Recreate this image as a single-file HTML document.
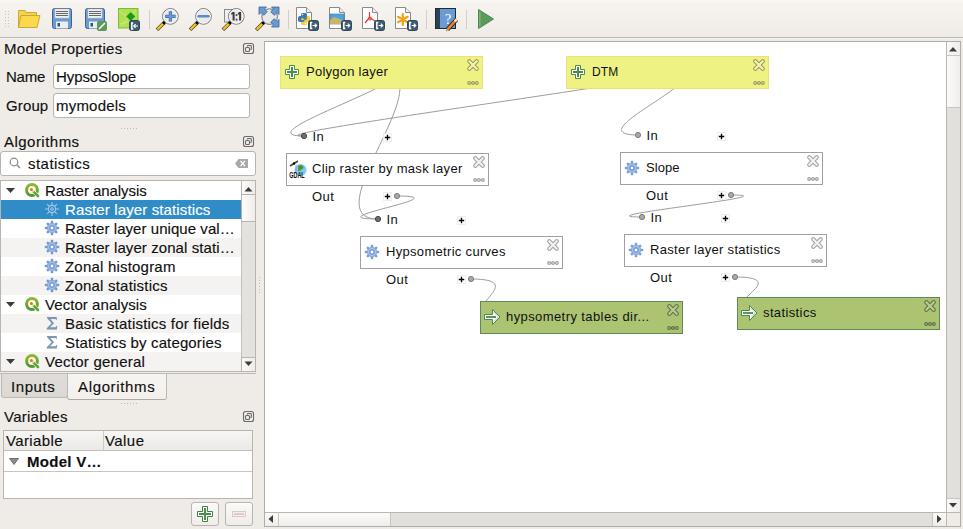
<!DOCTYPE html>
<html><head><meta charset="utf-8">
<style>
*{box-sizing:border-box;margin:0;padding:0}
html,body{width:963px;height:529px;overflow:hidden;background:#efece8;font-family:"Liberation Sans",sans-serif;color:#101010}
.abs{position:absolute}
#tb{left:0;top:0;width:963px;height:38px;background:linear-gradient(#f9f8f6 0px,#f7f4f0 2px,#efebe7 37px);border-bottom:1px solid #b9b5b0}
.t{position:absolute;white-space:nowrap;font-size:15px;line-height:18px;-webkit-text-stroke:0.15px currentColor}
.inp{position:absolute;background:#fff;border:1px solid #b8b4ae;border-radius:3px}
.float{position:absolute;width:11px;height:11px;border:1px solid #6b6b6b;border-radius:2px}
.float:after{content:"";position:absolute;left:2px;top:1px;width:4px;height:4px;border:1px solid #6b6b6b;border-radius:1px}
.float:before{content:"";position:absolute;left:4px;top:4px;width:4px;height:3px;border:1px solid #6b6b6b;border-radius:1px;background:#efece8}
#tree{left:0px;top:180px;width:256px;height:192px;background:#fff;border:1px solid #b8b4ae}
.row{position:absolute;left:0;width:240px;height:19px}
.row.alt{background:#f5f3f1}
.row.sel{background:#308cc6;color:#fff}
.sb{position:absolute;background:#e4e2df}
.btn{position:absolute;background:linear-gradient(#fbfaf9,#efedea);border:1px solid #b8b4ae}
#canvas{left:264px;top:41px;width:697px;height:486px;border:1px solid #b0ada8;background:#fff}
svg text{font-family:"Liberation Sans",sans-serif;font-size:13px;fill:#111}
</style></head><body>
<div id="tb" class="abs"></div>
<div class="abs" style="left:0;top:38px;width:963px;height:1px;background:#f7f4f1"></div>
<svg class="abs" style="left:0;top:0" width="963" height="38" viewBox="0 0 963 38">
<defs>
<g id="badge"><rect x="0.5" y="0.5" width="10" height="10" rx="2" fill="#3e5b72" stroke="#2f475a"/><path d="M4.3,2.6H2.8V8.4H4.3" fill="none" stroke="#fff" stroke-width="1.5"/><path d="M4.6,5.5H8.6M6.8,3.6L8.7,5.5 6.8,7.4" fill="none" stroke="#fff" stroke-width="1.2"/></g>
<g id="page"><path d="M0.5,0.5H10.5L15.5,5.5V21.5H0.5Z" fill="#fff" stroke="#8a8a8a"/><path d="M10.5,0.5V5.5H15.5" fill="#eee" stroke="#8a8a8a"/></g>
<g id="handle"><path d="M-13.4,13.4L-6.5,6.5" stroke="#3a3a3a" stroke-width="3.6"/><path d="M-13,13L-7,7" stroke="#f5c518" stroke-width="2.2"/><circle cx="-6.3" cy="6.3" r="1.7" fill="#000"/></g>
</defs>
<!-- handle dots -->
<g fill="#c6c3be">
<rect x="5" y="11" width="1" height="1"/><rect x="8" y="11" width="1" height="1"/>
<rect x="5" y="14" width="1" height="1"/><rect x="8" y="14" width="1" height="1"/>
<rect x="5" y="17" width="1" height="1"/><rect x="8" y="17" width="1" height="1"/>
<rect x="5" y="20" width="1" height="1"/><rect x="8" y="20" width="1" height="1"/>
<rect x="5" y="23" width="1" height="1"/><rect x="8" y="23" width="1" height="1"/>
<rect x="5" y="26" width="1" height="1"/><rect x="8" y="26" width="1" height="1"/>
</g>
<!-- open folder -->
<path d="M18.5,27.5V10.5H25L26,12.5H36.5V15.5" fill="#f6d24a" stroke="#c9a835"/>
<path d="M18.5,27.5L21,15.5H40L37,27.5Z" fill="#fcd84c" stroke="#c9a835"/>
<!-- save -->
<g>
<rect x="52.5" y="8.5" width="19" height="20" rx="2" fill="#6c9bd2" stroke="#3d6294"/>
<rect x="55" y="9" width="14" height="9" fill="#efefef" stroke="#c8c8c8" stroke-width=".6"/>
<path d="M56,11.5H68M56,13.5H68M56,15.5H68" stroke="#555" stroke-width=".9"/>
<rect x="56" y="21.5" width="12" height="7" fill="#eeeeee"/>
<rect x="57.5" y="23" width="2.5" height="3.5" fill="#2e5580"/>
</g>
<g>
<rect x="85.5" y="8.5" width="19" height="20" rx="2" fill="#6c9bd2" stroke="#3d6294"/>
<rect x="88" y="9" width="14" height="9" fill="#efefef" stroke="#c8c8c8" stroke-width=".6"/>
<path d="M89,11.5H101M89,13.5H101M89,15.5H101" stroke="#555" stroke-width=".9"/>
<rect x="89" y="21.5" width="12" height="7" fill="#eeeeee"/>
<rect x="90.5" y="23" width="2.5" height="3.5" fill="#2e5580"/>
<rect x="97" y="21" width="10" height="10" rx="2" fill="#5a9a5c"/>
<path d="M99,29L105,23" stroke="#fff" stroke-width="1.6"/>
</g>
<!-- export as image (green) -->
<rect x="118.5" y="8.5" width="19.5" height="19.5" fill="#b6de52" stroke="#6cc23e"/>
<path d="M119,11L129,18.5M136,10L121,26M120,24L134,20" stroke="#d9f09a" stroke-width=".6" fill="none"/>
<path d="M130.7,12L135.2,16.5 130.7,21 126.2,16.5Z" fill="#159b16"/>
<rect x="129.5" y="20.5" width="10" height="10" rx="2" fill="#3e5b72" stroke="#2f475a"/>
<path d="M133.3,23.1H131.8V28.9H133.3" fill="none" stroke="#fff" stroke-width="1.5"/>
<path d="M138,26H133.8M135.6,24.1L133.7,26 135.6,27.9" fill="none" stroke="#fff" stroke-width="1.2"/>
<rect x="149" y="10" width="1" height="19" fill="#d2cfca"/>
<!-- zoom in -->
<use href="#handle" x="170.4" y="16.4"/>
<circle cx="170.4" cy="16.4" r="7.8" fill="#e9e9e9" stroke="#6e6e6e" stroke-width="1"/><circle cx="170.4" cy="16.4" r="6.8" fill="none" stroke="#fafafa" stroke-width="1"/>
<path d="M170.4,11.2V21.6M165.2,16.4H175.6" stroke="#3f6ea8" stroke-width="3.2"/><path d="M170.4,11.8V21M165.8,16.4H175" stroke="#6a9ad2" stroke-width="1.8"/>
<!-- zoom out -->
<use href="#handle" x="203.5" y="16.4"/>
<circle cx="203.5" cy="16.4" r="7.8" fill="#e9e9e9" stroke="#6e6e6e" stroke-width="1"/><circle cx="203.5" cy="16.4" r="6.8" fill="none" stroke="#fafafa" stroke-width="1"/>
<path d="M198.6,16.3H208.4" stroke="#5b8cc4" stroke-width="2.6" stroke-linecap="round"/>
<!-- zoom 1:1 -->
<rect x="224.5" y="9.5" width="8" height="12.5" fill="#eee" stroke="#8a8a8a"/>
<use href="#handle" x="236.3" y="16.4"/>
<circle cx="236.3" cy="16.4" r="7.8" fill="#e9e9e9" stroke="#6e6e6e" stroke-width="1"/><circle cx="236.3" cy="16.4" r="6.8" fill="none" stroke="#fafafa" stroke-width="1"/>
<g fill="#3a3a3a"><path d="M232.6,12H234.6V20.5H232.6V14.2L231.2,14.8V13.2Z"/><rect x="235.7" y="14.2" width="1.7" height="1.7"/><rect x="235.7" y="18.8" width="1.7" height="1.7"/><path d="M239.1,12H241.1V20.5H239.1V14.2L237.9,14.8V13.2Z"/></g>
<!-- zoom full -->
<use href="#handle" x="269.6" y="16.6"/>
<circle cx="269.6" cy="16.6" r="7.8" fill="#e9e9e9" stroke="#6e6e6e" stroke-width="1"/>
<g fill="#6a9ad2" stroke="#3d6294" stroke-width=".8" stroke-linejoin="round">
<path transform="translate(259 7)" d="M0,0H7.5L5.5,2 8.3,4.8 4.8,8.3 2,5.5 0,7.5Z"/>
<path transform="translate(279 7) scale(-1 1)" d="M0,0H7.5L5.5,2 8.3,4.8 4.8,8.3 2,5.5 0,7.5Z"/>
<path transform="translate(279 27) scale(-1 -1)" d="M0,0H7.5L5.5,2 8.3,4.8 4.8,8.3 2,5.5 0,7.5Z"/>
</g>
<rect x="288" y="10" width="1" height="19" fill="#d2cfca"/>
<!-- python -->
<use href="#page" x="296" y="7"/>
<g fill="#f7cf3c"><rect x="301" y="20" width="6" height="5" rx="1.6"/><rect x="303.5" y="16" width="6.5" height="6" rx="1.8"/></g>
<g fill="#3d78b3"><rect x="301" y="13" width="6" height="5" rx="1.6"/><rect x="298" y="16" width="6.5" height="6" rx="1.8"/></g>
<rect x="304.2" y="18" width="2.6" height="1.6" fill="#3d78b3"/><rect x="301.2" y="18.4" width="2.6" height="1.6" fill="#f7cf3c"/>
<circle cx="302.6" cy="14.5" r=".7" fill="#fff"/><circle cx="305.5" cy="23.5" r=".7" fill="#fff"/>
<use href="#badge" x="308" y="20"/>
<!-- image -->
<use href="#page" x="329" y="7"/>
<rect x="330" y="14" width="14" height="10" fill="#49a6e6" stroke="#5b6e80" stroke-width=".6"/>
<path d="M330,20L334,17 338,18.5 344,21V24H330Z" fill="#cdb560"/>
<use href="#badge" x="341" y="20"/>
<!-- pdf -->
<use href="#page" x="362" y="7"/>
<path d="M369.5,12V17.5M369.5,17.5L365,23M369.5,17.5L375,21" stroke="#e8392c" stroke-width="1.2" fill="none"/>
<circle cx="370" cy="18.5" r="1.5" fill="none" stroke="#e8392c"/>
<use href="#badge" x="374" y="20"/>
<!-- svg -->
<use href="#page" x="395" y="7"/>
<path d="M402.8,14V25M398,16.8L407.6,22.2M398,22.2L407.6,16.8" stroke="#f7a110" stroke-width="2.2" stroke-linecap="round"/>
<use href="#badge" x="407" y="20"/>
<rect x="426" y="10" width="1" height="19" fill="#d2cfca"/>
<!-- help -->
<rect x="435.5" y="8.5" width="20" height="20" fill="#6a9bd3" stroke="#1e2a36"/>
<rect x="436" y="9" width="4" height="19" fill="#2c4258"/>
<text x="448" y="24" text-anchor="middle" style="font-family:'Liberation Serif';font-size:14px;fill:#fff">?</text>
<path d="M447.5,29.5L456.5,19.5" stroke="#3a2a1a" stroke-width="4.2"/>
<path d="M447.5,29.5L456.5,19.5" stroke="#f0841e" stroke-width="2.6"/>
<path d="M454.8,21.4L456.6,19.4" stroke="#e8e8e8" stroke-width="2.6"/>
<path d="M446.3,31L448,28.8" stroke="#9a9a9a" stroke-width="1.4"/>
<rect x="466" y="10" width="1" height="19" fill="#d2cfca"/>
<!-- run -->
<path d="M478.5,9.5V28.5L493.5,19Z" fill="#5a9a5a" stroke="#4a8a4a"/>
<path d="M479.9,11.5V26.5" stroke="#b8d8b0" stroke-width=".6"/>
</svg>

<!-- left panel -->
<div class="inp" style="left:53px;top:64px;width:197px;height:25px"></div>
<div class="inp" style="left:53px;top:93px;width:197px;height:25px"></div>

<div class="inp" style="left:0px;top:151px;width:256px;height:25px"></div>

<div id="tree" class="abs">
  <div class="row" style="top:0"></div>
  <div class="row sel" style="top:19px"></div>
  <div class="row" style="top:38px"></div>
  <div class="row alt" style="top:57px"></div>
  <div class="row" style="top:76px"></div>
  <div class="row alt" style="top:95px"></div>
  <div class="row" style="top:114px"></div>
  <div class="row alt" style="top:133px"></div>
  <div class="row" style="top:152px"></div>
  <div class="row alt" style="top:171px"></div>
</div>
<!-- tree scrollbar -->
<div class="sb" style="left:241px;top:181px;width:14px;height:190px;border-left:1px solid #c4c1bc"></div>
<div class="btn" style="left:241px;top:181px;width:14px;height:14px;border-width:0 0 1px 1px;background:linear-gradient(90deg,#fbfaf9,#efedea)"></div>
<div class="btn" style="left:241px;top:195px;width:14px;height:27px;border-width:0 0 1px 1px;background:linear-gradient(90deg,#fdfcfb,#efedea)"></div>
<div class="btn" style="left:241px;top:357px;width:14px;height:14px;border-width:1px 0 0 1px;background:linear-gradient(90deg,#fbfaf9,#efedea)"></div>

<!-- tabs -->
<div class="abs" style="left:1px;top:373px;width:67px;height:25px;background:linear-gradient(#e0ddd9,#dcd9d5);border:1px solid #bcb8b3;border-top:0;border-radius:0 0 3px 3px"></div>
<div class="abs" style="left:67px;top:373px;width:100px;height:27px;background:linear-gradient(#f7f5f2,#f3f0ec);border:1px solid #bcb8b3;border-top:0;border-bottom:1px solid #aca8a3;border-radius:0 0 3px 3px"></div>
<div class="abs" style="left:0;top:373px;width:256px;height:1px;background:#bdb9b4"></div>

<div class="abs" style="left:3px;top:430px;width:250px;height:69px;background:#fff;border:1px solid #b8b4ae"></div>
<div class="abs" style="left:4px;top:431px;width:248px;height:20px;background:linear-gradient(#f7f6f4,#ebe9e6);border-bottom:1px solid #c4c0bb"></div>
<div class="abs" style="left:103px;top:431px;width:1px;height:19px;background:#cdc9c4"></div>
<div class="abs" style="left:4px;top:471px;width:248px;height:1px;background:#c8c5c0"></div>
<div class="btn" style="left:191px;top:502px;width:28px;height:24px;border-radius:3px"></div>
<div class="btn" style="left:225px;top:502px;width:28px;height:24px;border-radius:3px"></div>


<!-- texts -->
<div class="t" style="left:4px;top:40px;letter-spacing:0.327px;">Model Properties</div>
<div class="t" style="left:6px;top:68px;letter-spacing:-0.239px;">Name</div>
<div class="t" style="left:56px;top:68px;letter-spacing:-0.088px;">HypsoSlope</div>
<div class="t" style="left:6px;top:97px;letter-spacing:0.124px;">Group</div>
<div class="t" style="left:56px;top:97px;letter-spacing:0.206px;">mymodels</div>
<div class="t" style="left:4px;top:133px;letter-spacing:0.471px;">Algorithms</div>
<div class="t" style="left:28px;top:155px;letter-spacing:0.465px;">statistics</div>
<div class="t" style="left:45px;top:182px;letter-spacing:-0.06px;">Raster analysis</div>
<div class="t" style="left:65px;top:201px;letter-spacing:0.125px;color:#fff">Raster layer statistics</div>
<div class="t" style="left:65px;top:220px;letter-spacing:0.056px;">Raster layer unique val…</div>
<div class="t" style="left:65px;top:239px;letter-spacing:0.088px;">Raster layer zonal stati…</div>
<div class="t" style="left:65px;top:258px;letter-spacing:0.203px;">Zonal histogram</div>
<div class="t" style="left:65px;top:277px;letter-spacing:0.22px;">Zonal statistics</div>
<div class="t" style="left:45px;top:296px;letter-spacing:0.058px;">Vector analysis</div>
<div class="t" style="left:65px;top:315px;letter-spacing:0.195px;">Basic statistics for fields</div>
<div class="t" style="left:65px;top:334px;letter-spacing:0.13px;">Statistics by categories</div>
<div class="t" style="left:45px;top:353px;letter-spacing:0.244px;">Vector general</div>
<div class="t" style="left:11px;top:378px;letter-spacing:0.565px;">Inputs</div>
<div class="t" style="left:78px;top:378px;letter-spacing:0.649px;">Algorithms</div>
<div class="t" style="left:4px;top:408px;letter-spacing:0.247px;">Variables</div>
<div class="t" style="left:6px;top:432px;letter-spacing:0.368px;">Variable</div>
<div class="t" style="left:105px;top:432px;letter-spacing:0.434px;">Value</div>
<div class="t" style="left:27px;top:453px;letter-spacing:0.283px;font-weight:bold">Model V…</div>

<svg class="abs" style="left:0;top:0" width="264" height="529" viewBox="0 0 264 529">
<defs>
<linearGradient id="qgr" x1="0" y1="0" x2="0" y2="1"><stop offset="0" stop-color="#8db82c"/><stop offset="1" stop-color="#4f982c"/></linearGradient>
<g id="qg"><circle cx="0" cy="0" r="5.4" fill="none" stroke="url(#qgr)" stroke-width="3"/><path d="M1.5,1.5L6.2,6.2" stroke="#fff" stroke-width="3.6"/><path d="M1.8,1.8L6,6" stroke="#5da33a" stroke-width="2.6" stroke-linecap="round"/><path d="M-0.5,-0.5L1.8,1.8" stroke="#f3e27a" stroke-width="2"/><circle cx="-0.6" cy="-0.6" r="1.5" fill="#f07318"/></g>
<g id="tg"><circle r="5" fill="#a3bde6"/><g fill="#6f98d4"><rect x="-1.2" y="-7.2" width="2.4" height="3"/><rect x="-1.2" y="4.2" width="2.4" height="3"/><rect x="-7.2" y="-1.2" width="3" height="2.4"/><rect x="4.2" y="-1.2" width="3" height="2.4"/><g transform="rotate(45)"><rect x="-1.2" y="-7" width="2.4" height="2.8"/><rect x="-1.2" y="4.2" width="2.4" height="2.8"/><rect x="-7" y="-1.2" width="2.8" height="2.4"/><rect x="4.2" y="-1.2" width="2.8" height="2.4"/></g></g><circle r="4.6" fill="none" stroke="#86a8dc" stroke-width=".9"/><circle r="2.3" fill="none" stroke="#7199d4" stroke-width="1.3"/><rect x="-1.1" y="-1.1" width="2.2" height="2.2" fill="#fff"/></g>
<g id="sig"><path d="M-5,-6H4.6L5,-3.2H4.2L3.4,-4H-1.6L2,0.2 -2,4.2H3.6L4.4,3H5.2L4.8,6.5H-5.2V5.2L-0.4,0.2 -5,-5Z" fill="#7d98ae" stroke="#7d98ae" stroke-width=".1" stroke-linejoin="round"/></g>
<g id="flt" fill="none" stroke="#6a6a6a" stroke-width="1.1"><rect x="0.5" y="0.5" width="10" height="10" rx="2"/><path d="M4.3,3.5V3.2Q4.3,2.5 5,2.5H7.5Q8.3,2.5 8.3,3.3V5.8Q8.3,6.5 7.6,6.5H7.3"/><rect x="2.5" y="4.5" width="4" height="4" rx="1"/></g>
<path id="tri" d="M0,0H9L4.5,5Z" fill="#3c3c3c"/>
</defs>
<use href="#flt" x="243" y="43"/>
<use href="#flt" x="243" y="136"/>
<use href="#flt" x="243" y="411"/>
<g fill="#bdb9b4"><rect x="121" y="128" width="1" height="1"/><rect x="124" y="128" width="1" height="1"/><rect x="127" y="128" width="1" height="1"/><rect x="130" y="128" width="1" height="1"/><rect x="133" y="128" width="1" height="1"/><rect x="136" y="128" width="1" height="1"/>
<rect x="121" y="403" width="1" height="1"/><rect x="124" y="403" width="1" height="1"/><rect x="127" y="403" width="1" height="1"/><rect x="130" y="403" width="1" height="1"/><rect x="133" y="403" width="1" height="1"/><rect x="136" y="403" width="1" height="1"/>
<rect x="259" y="277" width="1" height="1"/><rect x="259" y="280" width="1" height="1"/><rect x="259" y="283" width="1" height="1"/><rect x="259" y="286" width="1" height="1"/><rect x="259" y="289" width="1" height="1"/><rect x="259" y="292" width="1" height="1"/></g>
<!-- search icon -->
<circle cx="14" cy="162" r="3.8" fill="none" stroke="#8a8a8a" stroke-width="1.2"/>
<path d="M16.8,164.8L20,168" stroke="#8a8a8a" stroke-width="1.5"/>
<!-- clear icon -->
<path d="M235,163.5L238.5,159H248V168H238.5Z" fill="#a9a9a9"/>
<path d="M240.5,160.8L245,166.2M245,160.8L240.5,166.2" stroke="#fff" stroke-width="1.3"/>
<!-- tree -->
<use href="#tri" x="6" y="188"/>
<use href="#qg" x="32" y="190"/>
<g transform="translate(52 209)" fill="none" stroke="#b4cdf0" stroke-width="1.1" opacity=".9"><circle r="3.6"/><path d="M0,-7V-4M0,4V7M-7,0H-4M4,0H7M-4.9,-4.9L-2.6,-2.6M4.9,4.9L2.6,2.6M-4.9,4.9L-2.6,2.6M4.9,-4.9L2.6,-2.6"/><circle r="1.3"/></g>
<use href="#tg" x="52" y="228"/>
<use href="#tg" x="52" y="247"/>
<use href="#tg" x="52" y="266"/>
<use href="#tg" x="52" y="285"/>
<use href="#tri" x="6" y="302"/>
<use href="#qg" x="32" y="304"/>
<use href="#sig" x="52" y="323"/>
<use href="#sig" x="52" y="342"/>
<use href="#tri" x="6" y="359"/>
<use href="#qg" x="32" y="361"/>
<!-- tree scrollbar arrows -->
<path d="M244.5,191.5H252.5L248.5,187Z" fill="#3c3c3c"/>
<path d="M244.5,361.5H252.5L248.5,366Z" fill="#3c3c3c"/>
<!-- variables tree triangle -->
<path d="M9.5,458.5H18.5L14,464.5Z" fill="#8c8c8c" stroke="#5c5c5c" stroke-width=".8" stroke-linejoin="round"/>
<!-- plus button -->
<path d="M202.5,506.5h5v5h5v5h-5v5h-5v-5h-5v-5h5z" fill="#fff" stroke="#3f833f" stroke-width="1"/>
<path d="M205,508v12M199,514h12" stroke="#4c8e4c" stroke-width="2"/>
<!-- minus button -->
<rect x="232.5" y="511.5" width="13" height="5" fill="#f6eeee" stroke="#dcc8c8"/>
<rect x="234" y="513.2" width="10" height="1.8" fill="#dcc6c6"/>
</svg>

<div id="canvas" class="abs"></div>
<div class="abs" style="left:946px;top:42px;width:14px;height:470px;background:#e2e0dc;border-left:1px solid #bab6b0"></div>
<div class="abs" style="left:946px;top:42px;width:14px;height:14px;background:linear-gradient(90deg,#faf9f8,#efedea);border-left:1px solid #bab6b0;border-bottom:1px solid #c9c5bf"></div>
<div class="abs" style="left:946px;top:56px;width:14px;height:52px;background:linear-gradient(90deg,#fbfaf9,#f0eeeb);border-left:1px solid #bab6b0;border-bottom:1px solid #c9c5bf"></div>
<div class="abs" style="left:946px;top:498px;width:14px;height:14px;background:linear-gradient(90deg,#faf9f8,#efedea);border-left:1px solid #bab6b0;border-top:1px solid #c9c5bf"></div>
<div class="abs" style="left:265px;top:512px;width:695px;height:14px;background:#e2e0dc;border-top:1px solid #bab6b0"></div>
<div class="abs" style="left:265px;top:512px;width:14px;height:14px;background:linear-gradient(#faf9f8,#efedea);border-top:1px solid #bab6b0;border-right:1px solid #c9c5bf"></div>
<div class="abs" style="left:279px;top:512px;width:112px;height:14px;background:linear-gradient(#fbfaf9,#f0eeeb);border-top:1px solid #bab6b0;border-right:1px solid #c9c5bf"></div>
<div class="abs" style="left:932px;top:512px;width:14px;height:14px;background:linear-gradient(#faf9f8,#efedea);border-top:1px solid #bab6b0;border-left:1px solid #c9c5bf"></div>
<div class="abs" style="left:946px;top:512px;width:14px;height:14px;background:#efece8;border-top:1px solid #bab6b0;border-left:1px solid #bab6b0"></div>
<svg class="abs" style="left:0;top:0" width="963" height="529" viewBox="0 0 963 529">
<path d="M949,51.5H957L953,47Z" fill="#3c3c3c"/>
<path d="M949,503H957L953,507.5Z" fill="#3c3c3c"/>
<path d="M937,515V523L941.5,519Z" fill="#3c3c3c"/>
<path d="M273,515V523L268.5,519Z" fill="#3c3c3c"/>
</svg>

<svg class="abs" style="left:0;top:0" width="963" height="529" viewBox="0 0 963 529">
<defs><clipPath id="cv"><rect x="265" y="42" width="681" height="470"/></clipPath>
<g id="gear"><circle r="5" fill="#a9c2ea"/><g fill="#78a0d8"><rect x="-1.2" y="-7.2" width="2.4" height="3"/><rect x="-1.2" y="4.2" width="2.4" height="3"/><rect x="-7.2" y="-1.2" width="3" height="2.4"/><rect x="4.2" y="-1.2" width="3" height="2.4"/><g transform="rotate(45)"><rect x="-1.2" y="-7" width="2.4" height="2.8"/><rect x="-1.2" y="4.2" width="2.4" height="2.8"/><rect x="-7" y="-1.2" width="2.8" height="2.4"/><rect x="4.2" y="-1.2" width="2.8" height="2.4"/></g></g><circle r="4.6" fill="none" stroke="#86a8dc" stroke-width=".9"/><circle r="2.3" fill="none" stroke="#7199d4" stroke-width="1.3"/><rect x="-1.1" y="-1.1" width="2.2" height="2.2" fill="#fff"/></g>
<g id="plus"><path fill="#fff" stroke="#4e8a4e" d="M-2.5,-6.5h5v4h4v5h-4v4h-5v-4h-4v-5h4z"/><path stroke="#4a8a4a" stroke-width="2" d="M0,-5v10M-5,0h10"/></g>
<g id="arrow"><path fill="#fff" stroke="#4a8a4a" d="M-7.5,-2.5h8v-5l7.5,7.5 -7.5,7.5v-5h-8z"/><path stroke="#4a8a4a" stroke-width="1.8" d="M-6,0h10"/><path fill="none" stroke="#6aa66a" stroke-width=".9" stroke-dasharray="1 .6" d="M2,-4.6L6.4,0 2,4.6"/></g>
<path id="del" d="M-3.7,-3.7L3.7,3.7M3.7,-3.7L-3.7,3.7"/>
<g id="dots"><path d="M-3,0H3" stroke-width="1.2"/><circle cx="-3.9" cy="0" r="1.35"/><circle cx="0" cy="0" r="1.35"/><circle cx="3.9" cy="0" r="1.35"/></g>
<g id="gdal"><circle cx="2.5" cy="1" r="6" fill="#7ccdf0"/><path d="M0,-3C1.5,-4.5 4,-4 5.5,-2.5 6,-0.5 4.5,0.5 3.5,0.5 2.5,2 1,2.5 0,1.5Z" fill="#45a045"/><path d="M1.8,-2.3C3,-2.8 4.3,-2.3 4.3,-1 3.5,0 2.3,0 1.8,-2.3Z" fill="#8c6b2c"/><path d="M-8,-3L0,-8" stroke="#444" stroke-width="1.5"/><circle cx="-4" cy="-5.5" r="1.2" fill="#000"/><path d="M-2,-4.5V3" stroke="#e07888" stroke-width=".7"/><text x="-8.8" y="8.6" font-family="Liberation Sans" font-weight="bold" fill="#000" style="font-size:8.6px" textLength="15.5" lengthAdjust="spacingAndGlyphs">GDAL</text></g>
<g id="pb"><rect x="-3.5" y="-3.5" width="8" height="8" fill="#fff" stroke="#eee"/><path stroke="#000" stroke-width="1.35" d="M.5,-2.2v5.4M-2.2,.5h5.4"/></g>
</defs>
<g clip-path="url(#cv)">
<g fill="none" stroke="#9c9c9c" stroke-width="1">
<path d="M381,72 C447.67,72 237.33,136 304,136"/>
<path d="M381,72 C447.67,72 311.33,219 378,219"/>
<path d="M667,72 C733.67,72 237.33,136 304,136"/>
<path d="M667,72 C733.67,72 571.33,135 638,135"/>
<path d="M397,196 C463.67,196 311.33,219 378,219"/>
<path d="M731,195 C797.67,195 575.33,217 642,217"/>
<path d="M471,279 C537.67,279 439.33,317 506,317"/>
<path d="M735,277 C801.67,277 696.33,313 763,313"/>
</g>
<rect x="280.5" y="56.5" width="202" height="32" fill="#eef283" stroke="#eae276"/>
<use href="#plus" x="292" y="72"/>
<text x="306" y="76" style="letter-spacing:.25px">Polygon layer</text>
<use href="#del" x="473" y="65" fill="none" stroke="#9c9a5a" stroke-width="4.3" stroke-linecap="round"/>
<use href="#del" x="473" y="65" fill="none" stroke="#f0f3b0" stroke-width="2.3" stroke-linecap="round"/>
<use href="#dots" x="473" y="83" fill="#f0f3b0" stroke="#9c9a5a" stroke-width="1.1"/>
<rect x="566.5" y="56.5" width="202" height="32" fill="#eef283" stroke="#eae276"/>
<use href="#plus" x="578" y="72"/>
<text x="592" y="76" style="font-size:12px;letter-spacing:.1px">DTM</text>
<use href="#del" x="759" y="65" fill="none" stroke="#9c9a5a" stroke-width="4.3" stroke-linecap="round"/>
<use href="#del" x="759" y="65" fill="none" stroke="#f0f3b0" stroke-width="2.3" stroke-linecap="round"/>
<use href="#dots" x="759" y="83" fill="#f0f3b0" stroke="#9c9a5a" stroke-width="1.1"/>
<rect x="286.5" y="153.5" width="202" height="32" fill="#ffffff" stroke="#a0a0a4"/>
<use href="#gdal" x="298" y="169"/>
<text x="312" y="173" style="letter-spacing:.3px">Clip raster by mask layer</text>
<use href="#del" x="479" y="162" fill="none" stroke="#a0a0a0" stroke-width="4.3" stroke-linecap="round"/>
<use href="#del" x="479" y="162" fill="none" stroke="#f2f2f2" stroke-width="2.3" stroke-linecap="round"/>
<use href="#dots" x="479" y="180" fill="#f2f2f2" stroke="#a0a0a0" stroke-width="1.1"/>
<text x="312.5" y="141" style="letter-spacing:.4px">In</text>
<text x="312" y="200.6" style="letter-spacing:.4px">Out</text>
<use href="#pb" x="387" y="137"/>
<use href="#pb" x="387" y="196"/>
<rect x="620.5" y="152.5" width="202" height="32" fill="#ffffff" stroke="#a0a0a4"/>
<use href="#gear" x="632" y="168"/>
<text x="646" y="172" style="letter-spacing:.06px">Slope</text>
<use href="#del" x="813" y="161" fill="none" stroke="#a0a0a0" stroke-width="4.3" stroke-linecap="round"/>
<use href="#del" x="813" y="161" fill="none" stroke="#f2f2f2" stroke-width="2.3" stroke-linecap="round"/>
<use href="#dots" x="813" y="179" fill="#f2f2f2" stroke="#a0a0a0" stroke-width="1.1"/>
<text x="646.5" y="140" style="letter-spacing:.4px">In</text>
<text x="646" y="199.6" style="letter-spacing:.4px">Out</text>
<use href="#pb" x="721" y="136"/>
<use href="#pb" x="721" y="195"/>
<rect x="360.5" y="236.5" width="202" height="32" fill="#ffffff" stroke="#a0a0a4"/>
<use href="#gear" x="372" y="252"/>
<text x="386" y="256" style="letter-spacing:.31px">Hypsometric curves</text>
<use href="#del" x="553" y="245" fill="none" stroke="#a0a0a0" stroke-width="4.3" stroke-linecap="round"/>
<use href="#del" x="553" y="245" fill="none" stroke="#f2f2f2" stroke-width="2.3" stroke-linecap="round"/>
<use href="#dots" x="553" y="263" fill="#f2f2f2" stroke="#a0a0a0" stroke-width="1.1"/>
<text x="386.5" y="224" style="letter-spacing:.4px">In</text>
<text x="386" y="283.6" style="letter-spacing:.4px">Out</text>
<use href="#pb" x="461" y="220"/>
<use href="#pb" x="461" y="279"/>
<rect x="624.5" y="234.5" width="202" height="32" fill="#ffffff" stroke="#a0a0a4"/>
<use href="#gear" x="636" y="250"/>
<text x="650" y="254" style="letter-spacing:.3px">Raster layer statistics</text>
<use href="#del" x="817" y="243" fill="none" stroke="#a0a0a0" stroke-width="4.3" stroke-linecap="round"/>
<use href="#del" x="817" y="243" fill="none" stroke="#f2f2f2" stroke-width="2.3" stroke-linecap="round"/>
<use href="#dots" x="817" y="261" fill="#f2f2f2" stroke="#a0a0a0" stroke-width="1.1"/>
<text x="650.5" y="222" style="letter-spacing:.4px">In</text>
<text x="650" y="281.6" style="letter-spacing:.4px">Out</text>
<use href="#pb" x="725" y="218"/>
<use href="#pb" x="725" y="277"/>
<rect x="480.5" y="301.5" width="202" height="32" fill="#acc472" stroke="#5a8c5a"/>
<use href="#arrow" x="492" y="317"/>
<text x="506" y="321" style="letter-spacing:.41px">hypsometry tables dir...</text>
<use href="#del" x="673" y="310" fill="none" stroke="#5f6f48" stroke-width="4.3" stroke-linecap="round"/>
<use href="#del" x="673" y="310" fill="none" stroke="#b9cc8c" stroke-width="2.3" stroke-linecap="round"/>
<use href="#dots" x="673" y="328" fill="#b9cc8c" stroke="#5f6f48" stroke-width="1.1"/>
<rect x="737.5" y="297.5" width="202" height="32" fill="#acc472" stroke="#5a8c5a"/>
<use href="#arrow" x="749" y="313"/>
<text x="763" y="317" style="letter-spacing:.38px">statistics</text>
<use href="#del" x="930" y="306" fill="none" stroke="#5f6f48" stroke-width="4.3" stroke-linecap="round"/>
<use href="#del" x="930" y="306" fill="none" stroke="#b9cc8c" stroke-width="2.3" stroke-linecap="round"/>
<use href="#dots" x="930" y="324" fill="#b9cc8c" stroke="#5f6f48" stroke-width="1.1"/>
<circle cx="304" cy="136" r="2.6" fill="#6e6e6e" stroke="#444" stroke-width="1"/>
<circle cx="397" cy="196" r="2.6" fill="#a8a8a8" stroke="#7e7e7e" stroke-width="1"/>
<circle cx="378" cy="219" r="2.6" fill="#6e6e6e" stroke="#444" stroke-width="1"/>
<circle cx="471" cy="279" r="2.6" fill="#a8a8a8" stroke="#7e7e7e" stroke-width="1"/>
<circle cx="638" cy="135" r="2.6" fill="#a8a8a8" stroke="#7e7e7e" stroke-width="1"/>
<circle cx="731" cy="195" r="2.6" fill="#a8a8a8" stroke="#7e7e7e" stroke-width="1"/>
<circle cx="642" cy="217" r="2.6" fill="#a8a8a8" stroke="#7e7e7e" stroke-width="1"/>
<circle cx="735" cy="277" r="2.6" fill="#a8a8a8" stroke="#7e7e7e" stroke-width="1"/>
</g></svg>
</body></html>
